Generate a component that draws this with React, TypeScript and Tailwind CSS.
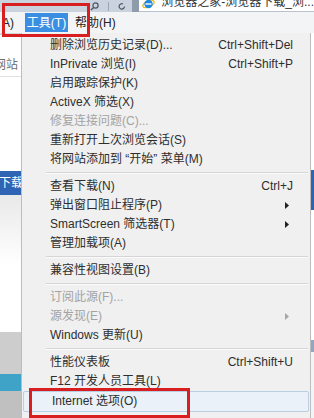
import React from "react";

type Item =
  | { kind: "item"; label: string; shortcut?: string; disabled?: boolean; arrow?: boolean; hl?: boolean }
  | { kind: "sep" };

const items: Item[] = [
  { kind: "item", label: "删除浏览历史记录(D)...", shortcut: "Ctrl+Shift+Del" },
  { kind: "item", label: "InPrivate 浏览(I)", shortcut: "Ctrl+Shift+P" },
  { kind: "item", label: "启用跟踪保护(K)" },
  { kind: "item", label: "ActiveX 筛选(X)" },
  { kind: "item", label: "修复连接问题(C)...", disabled: true },
  { kind: "item", label: "重新打开上次浏览会话(S)" },
  { kind: "item", label: "将网站添加到 “开始” 菜单(M)" },
  { kind: "sep" },
  { kind: "item", label: "查看下载(N)", shortcut: "Ctrl+J" },
  { kind: "item", label: "弹出窗口阻止程序(P)", arrow: true },
  { kind: "item", label: "SmartScreen 筛选器(T)", arrow: true },
  { kind: "item", label: "管理加载项(A)" },
  { kind: "sep" },
  { kind: "item", label: "兼容性视图设置(B)" },
  { kind: "sep" },
  { kind: "item", label: "订阅此源(F)...", disabled: true },
  { kind: "item", label: "源发现(E)", disabled: true, arrow: true },
  { kind: "item", label: "Windows 更新(U)" },
  { kind: "sep" },
  { kind: "item", label: "性能仪表板", shortcut: "Ctrl+Shift+U" },
  { kind: "item", label: "F12 开发人员工具(L)" },
  { kind: "item", label: "Internet 选项(O)", hl: true },
];

const font = { fontFamily: '"Liberation Sans", "Noto Sans CJK SC", sans-serif' };

function Arrow({ disabled }: { disabled?: boolean }) {
  return (
    <svg width="4" height="7" viewBox="0 0 4 7" className="shrink-0">
      <path d="M0 0 L4 3.5 L0 7 Z" fill={disabled ? "#a8a8a8" : "#222"} />
    </svg>
  );
}

function MenuRow({ it }: { it: Item }) {
  if (it.kind === "sep") {
    return (
      <div className="h-[8px] flex flex-col justify-center pl-[24px] pr-[2px]">
        <div className="h-px bg-[#d5d5d5]" />
        <div className="h-px bg-[#fbfbfb]" />
      </div>
    );
  }
  const color = it.disabled ? "text-[#a3a3a3]" : "text-[#2e2e2e]";
  return (
    <div
      className={
        "h-[19px] flex items-center pl-[28px] pr-[12px] text-[12px] leading-[19px] " +
        color +
        (it.hl ? " mx-[1px] border border-[#b9cde3] bg-[#eaf1f9] rounded-[2px] h-[21px] pl-[27px]" : "")
      }
    >
      <span className="flex-1 whitespace-nowrap">{it.label}</span>
      {it.shortcut && <span className="whitespace-nowrap pr-[5px]">{it.shortcut}</span>}
      {it.arrow && (
        <span className="pr-[9px] flex items-center">
          <Arrow disabled={it.disabled} />
        </span>
      )}
    </div>
  );
}

function IELogo() {
  return (
    <svg width="13" height="12" viewBox="0 0 13 12">
      <ellipse cx="6.5" cy="6" rx="6" ry="3" fill="none" stroke="#f2b400" strokeWidth="1.3" transform="rotate(-25 6.5 6)" />
      <circle cx="6.5" cy="6" r="4.2" fill="#1e88e5" />
      <rect x="3.5" y="5.3" width="6" height="1.4" fill="#fff" />
    </svg>
  );
}

export default function App() {
  return (
    <div className="w-[314px] h-[418px] overflow-hidden bg-white relative select-none" style={font}>
      {/* top strip */}
      <div className="h-[12px] flex overflow-hidden">
        <div className="w-[147px] bg-[#c9d2dd] flex items-center justify-end pr-[6px] gap-[9px]">
          <svg width="9" height="9" viewBox="0 0 9 9">
            <circle cx="5.5" cy="3.5" r="2.6" fill="none" stroke="#4b5564" strokeWidth="1.2" />
            <path d="M3.6 5.4 L1 8" stroke="#4b5564" strokeWidth="1.4" />
          </svg>
          <div className="w-px h-[9px] bg-[#9aa6b4]" />
          <svg width="8" height="9" viewBox="0 0 8 9">
            <path d="M6.5 4.5 A2.7 2.7 0 1 1 5 2" fill="none" stroke="#4b5564" strokeWidth="1.2" />
          </svg>
        </div>
        <div className="w-[8px] bg-[#8f9bab]" />
        <div className="flex-1 bg-white flex items-start gap-[6px] pl-[3px] border-b border-[#b8c2ce]">
          <div className="mt-[-2px]">
            <IELogo />
          </div>
          <span className="text-[12px] leading-[14px] mt-[-5px] text-[#333] whitespace-nowrap">浏览器之家-浏览器下载_浏...</span>
        </div>
      </div>
      {/* menu bar */}
      <div className="h-[21px] bg-[#f3f4f6] flex items-center text-[12px] text-[#222]">
        <span className="pl-[2px] w-[25px]">A)</span>
        <span className="h-[19px] w-[43px] bg-[#3b8fe3] text-white flex items-center justify-center">工具(T)</span>
        <span className="pl-[7px]">帮助(H)</span>
      </div>
      {/* body */}
      <div className="flex h-[385px]">
        {/* page behind, left */}
        <div className="w-[21px] flex flex-col overflow-hidden">
          <div className="h-[2px] bg-[#d6d6d6]" />
          <div className="h-[42px] bg-white border-b border-[#e2e2e2] flex items-center">
            <span className="text-[12px] text-[#6f6f6f] whitespace-nowrap ml-[-6px] mt-[18px]">网站</span>
          </div>
          <div className="h-[94px] bg-white" />
          <div className="h-[24px] bg-[#2f63b3] flex items-center">
            <span className="text-[12px] text-white whitespace-nowrap ml-[-1px]">下载</span>
          </div>
          <div className="h-[70px] bg-gradient-to-b from-[#e9e9e9] to-white" />
          <div className="h-[67px] bg-white" />
          <div className="h-[42px] bg-[#cdcdcd]" />
          <div className="h-[17px] bg-[#3ea3c6]" />
          <div className="flex-1 bg-[#c0c0c0]" />
        </div>
        {/* menu */}
        <div className="w-[290px] bg-[#f0f0f0] border-l border-r border-[#bdbdbd] pt-[3px] flex flex-col">
          {items.map((it, i) => (
            <MenuRow key={i} it={it} />
          ))}
        </div>
        {/* page behind, right sliver */}
        <div className="flex-1 flex flex-col">
          <div className="h-[137px] bg-white" />
          <div className="h-[40px] bg-[#2f63b3]" />
          <div className="h-[130px] bg-white" />
          <div className="h-[12px] bg-[#8fa6c4]" />
          <div className="flex-1 bg-[#f4f4f4]" />
        </div>
      </div>
      {/* annotation boxes */}
      <div className="absolute left-[2px] top-[3px] w-[88px] h-[34px] border-[3px] border-[#d81e1e]" />
      <div className="absolute left-[29px] top-[388px] w-[161px] h-[30px] border-[3px] border-[#d81e1e]" />
    </div>
  );
}
